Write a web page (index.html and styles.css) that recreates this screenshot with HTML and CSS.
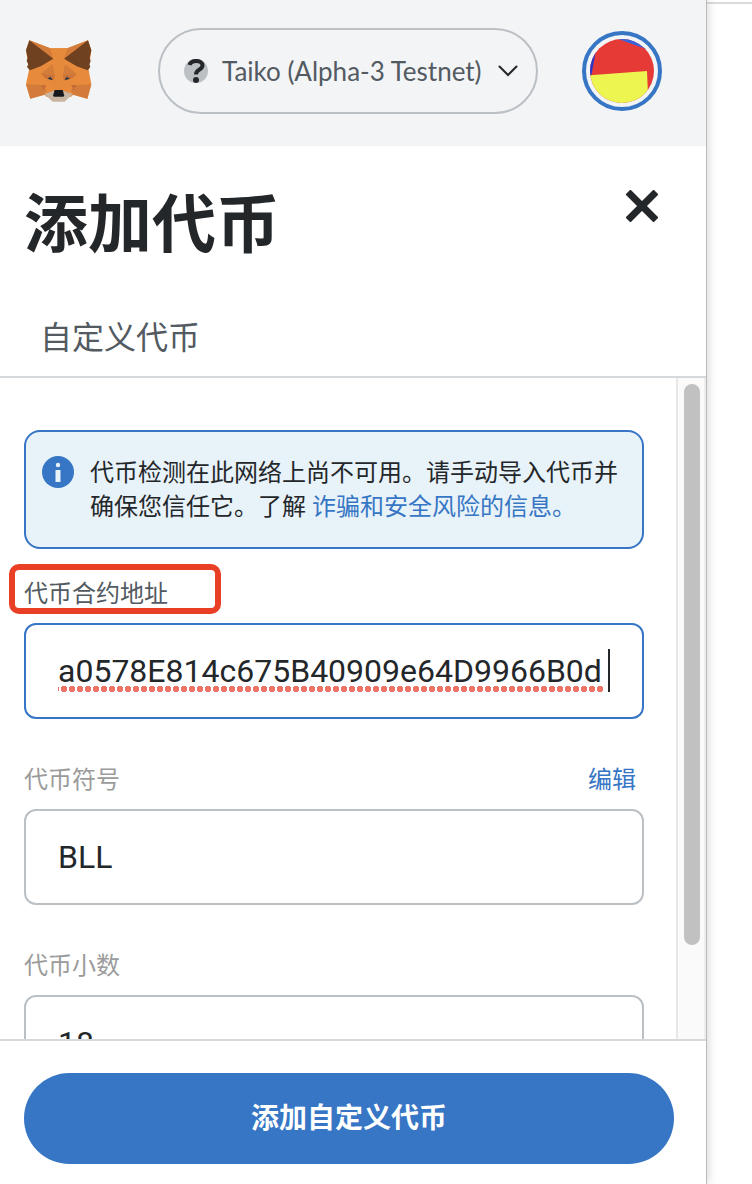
FILE: index.html
```html
<!DOCTYPE html>
<html lang="zh-CN">

<head>
    <meta charset="UTF-8">
    <meta name="viewport" content="width=device-width, initial-scale=1.0">
    <title>添加代币</title>
    <link rel="stylesheet" href="styles.css">
</head>

<body>
    <div class="popup">
        <header class="app-header">
            <svg class="logo" viewBox="45 45 201 186" aria-hidden="true">
                <polygon fill="#e78a3b" points="58,46 121,70 172,70 234,46 244,76 236,135 244,178 232,221 190,209 182,216 110,216 103,209 61,221 48,178 57,135 48,76" />
                <polygon fill="#d47c3a" points="58,46 121,70 130,101" />
                <polygon fill="#d47c3a" points="234,46 172,70 162,101" />
                <polygon fill="#6f4120" points="58,46 130,101 92,124 60,136 51,126 55,118 50,108 53,98 48,76" />
                <polygon fill="#6f4120" points="234,46 162,101 200,124 233,136 241,126 238,118 242,108 239,98 244,76" />
                <polygon fill="#e5893a" points="121,70 172,70 162,101 158,196 134,196 130,101" />
                <polygon fill="#d47c3a" points="128,118 134,150 93,146" />
                <polygon fill="#d47c3a" points="165,118 159,150 200,146" />
                <polygon fill="#cb7338" points="93,146 134,150 132,166 106,160" />
                <polygon fill="#cb7338" points="200,146 159,150 161,166 187,160" />
                <polygon fill="#d27b3b" points="48,178 92,180 110,196 103,209 61,221" />
                <polygon fill="#d27b3b" points="244,178 200,180 182,196 190,209 232,221" />
                <polygon fill="#c26c36" points="92,180 108,180 103,196" />
                <polygon fill="#c26c36" points="200,180 184,180 190,196" />
                <polygon fill="#c8b5a2" points="103,207 130,198 162,198 188,207 164,230 128,230" />
                <polygon fill="#16181b" points="134,195 158,195 163,212 160,215 132,215 129,212" />
                <polygon fill="#24384a" points="112,161 122,155 128,166" />
                <polygon fill="#24384a" points="180,161 170,155 164,166" />
            </svg>

            <button type="button" class="network">
                <svg class="network-icon" viewBox="0 0 24 24" aria-hidden="true">
                    <circle cx="12" cy="12" r="12" fill="#bbc0c5" />
                    <path d="M5.500 6C7 .5 18.500 .5 18.500 6.500C18.500 11 12 10 12 15.500" fill="none" stroke="#24272a" stroke-width="4" />
                    <circle cx="12" cy="21" r="3" fill="#24272a" />
                </svg>
                <span class="network-name">Taiko (Alpha-3 Testnet)</span>
                <svg class="chevron" viewBox="0 0 20 12" aria-hidden="true">
                    <path d="M1.500 1.500L10 10L18.500 1.500" fill="none" stroke="#24272a" stroke-width="2" stroke-linecap="round" />
                </svg>
            </button>

            <button type="button" class="account" aria-label="账户">
                <svg class="identicon" viewBox="0 0 192 192" aria-hidden="true">
                    <rect width="192" height="192" fill="#e53a36" />
                    <polygon fill="#2b36c8" points="0,0 24,0 4,110 0,110" />
                    <polygon fill="#3464e2" points="85,0 192,0 192,40 158,26" />
                    <polygon fill="#edf550" points="0,109 171,96 175,192 0,192" />
                </svg>
            </button>
        </header>

        <div class="page-header">
            <div class="title-row">
                <h1>添加代币</h1>
                <button type="button" class="close" aria-label="关闭">
                    <svg viewBox="0 0 32 32" aria-hidden="true">
                        <path d="M2 2L30 30M30 2L2 30" stroke="#24272a" stroke-width="7" />
                    </svg>
                </button>
            </div>
            <div class="tab">自定义代币</div>
        </div>

        <div class="page-body">
            <form class="token-form" id="tokenForm">
                <div class="notice">
                    <svg class="notice-icon" viewBox="0 0 32 32" aria-hidden="true">
                        <circle cx="16" cy="16" r="16" fill="#3676c4" />
                        <circle cx="16" cy="9" r="2.200" fill="#e8f2f9" />
                        <rect x="13.500" y="14" width="5" height="12" fill="#e8f2f9" />
                    </svg>
                    <p>代币检测在此网络上尚不可用。请手动导入代币并确保您信任它。了解 <a href="#">诈骗和安全风险的信息。</a></p>
                </div>

                <div class="field active">
                    <div class="label-row">
                        <label for="address">代币合约地址</label>
                    </div>
                    <div class="input-box">
                        <input type="text" id="address" value="a0578E814c675B40909e64D9966B0d" spellcheck="false">
                        <span class="spelling"></span>
                        <span class="caret"></span>
                    </div>
                </div>

                <div class="field">
                    <div class="label-row">
                        <label for="symbol">代币符号</label>
                        <button type="button" class="edit">编辑</button>
                    </div>
                    <div class="input-box">
                        <input type="text" id="symbol" value="BLL">
                    </div>
                </div>

                <div class="field">
                    <div class="label-row">
                        <label for="decimals">代币小数</label>
                    </div>
                    <div class="input-box">
                        <input type="text" id="decimals" value="18">
                    </div>
                </div>
            </form>
            <div class="scrollbar" aria-hidden="true">
                <div class="thumb"></div>
            </div>
        </div>

        <footer>
            <button type="submit" form="tokenForm" class="submit">添加自定义代币</button>
        </footer>
    </div>
</body>

</html>
```
FILE: styles.css
```css
*,
*::before {
    box-sizing: border-box;
    margin: 0;
    padding: 0;
}

body {
    background: linear-gradient(white 2px, #dadada 2px, #dadada 4px, white 4px);
    color: #24272a;
    font-family: Roboto, "Noto Sans CJK SC", sans-serif;
    font-size: 24px;
    line-height: 34px;
}

button,
input {
    font: inherit;
    color: inherit;
    background: none;
    border: none;
    outline: none;
}

button {
    cursor: pointer;
}

svg {
    display: block;
}

.popup {
    display: flex;
    flex-direction: column;
    height: 100vh;
    margin-right: 45px;
    border-right: 1px solid #b8bcbc;
    box-shadow: 0 0 10px rgba(0, 0, 0, 0.2);
    background: white;
}

/* top bar */
.app-header {
    display: flex;
    align-items: center;
    flex-shrink: 0;
    padding: 28px 44px 32px 25px;
    background: #f2f4f6;
}

.logo {
    width: 67px;
    height: 62px;
}

.network {
    flex: 1;
    display: flex;
    align-items: center;
    min-width: 0;
    height: 86px;
    margin: 0 44px 0 66px;
    padding: 0 18px 0 24px;
    border: 2px solid #bbc0c5;
    border-radius: 43px;
    color: #535a61;
    font-family: Lato, sans-serif;
    font-size: 26px;
}

.network-icon {
    width: 24px;
    height: 24px;
}

.network-name {
    flex: 1;
    padding-left: 14px;
    text-align: left;
    white-space: nowrap;
}

.chevron {
    width: 20px;
    height: 12px;
}

.account {
    width: 80px;
    height: 80px;
    padding: 4px;
    border: 4px solid #3676c4;
    border-radius: 50%;
}

.identicon {
    width: 64px;
    height: 64px;
    border-radius: 50%;
}

/* page title */
.page-header {
    flex-shrink: 0;
    padding: 40px 48px 14px 24px;
    border-bottom: 2px solid #d6d9dc;
}

.title-row {
    display: flex;
    justify-content: space-between;
    align-items: flex-start;
    margin-bottom: 48px;
}

h1 {
    font-size: 64px;
    line-height: 80px;
    font-weight: 700;
}

.close {
    width: 32px;
    height: 32px;
    margin-top: 4px;
}

.tab {
    padding-left: 16px;
    font-size: 32px;
    line-height: 48px;
    color: #535a61;
}

/* form */
.page-body {
    flex: 1;
    display: flex;
    min-height: 0;
    overflow: hidden;
}

.token-form {
    flex: 1;
    min-width: 0;
    padding: 52px 32px 0 24px;
}

.notice {
    display: flex;
    align-items: flex-start;
    gap: 16px;
    margin-bottom: 28px;
    padding: 24px 20px 23px 16px;
    border: 2px solid #3676c4;
    border-radius: 16px;
    background: #e8f2f9;
}

.notice-icon {
    flex-shrink: 0;
    width: 32px;
    height: 32px;
}

a,
.edit {
    color: #3676c4;
    text-decoration: none;
}

.field {
    margin-bottom: 44px;
}

.label-row {
    display: flex;
    justify-content: space-between;
    margin-bottom: 12px;
    padding-right: 8px;
    color: #9b9b9b;
}

.active .label-row {
    position: relative;
    color: #535a61;
}

/* red marker round the address label */
.active .label-row::before {
    content: "";
    position: absolute;
    top: -13px;
    left: -15px;
    width: 212px;
    height: 50px;
    border: 6px solid #e93f24;
    border-radius: 10px;
}

.input-box {
    position: relative;
    height: 96px;
    padding: 0 32px;
    border: 2px solid #bbc0c5;
    border-radius: 12px;
}

.active .input-box {
    border-color: #3676c4;
}

.input-box input {
    width: 100%;
    height: 100%;
    font-size: 32px;
}

.spelling {
    position: absolute;
    left: 32px;
    right: 38px;
    bottom: 25px;
    height: 6px;
    background: radial-gradient(circle, #ec7467 3px, transparent 3px) 2px 0 / 8px 6px;
}

.caret {
    position: absolute;
    right: 32px;
    bottom: 25px;
    width: 2px;
    height: 43px;
    background: #24272a;
}

.scrollbar {
    width: 30px;
    padding: 6px;
    border-left: 2px solid #e8e8e8;
    border-right: 2px solid #ededed;
    background: #fafafa;
}

.thumb {
    width: 16px;
    height: calc(100% - 88px);
    border-radius: 8px;
    background: #c1c1c1;
}

/* bottom button */
footer {
    flex-shrink: 0;
    padding: 32px 32px 20px 24px;
    border-top: 2px solid #d6d9dc;
}

.submit {
    display: block;
    width: 100%;
    height: 91px;
    border-radius: 46px;
    background: #3676c4;
    color: white;
    font-size: 28px;
    font-weight: 700;
}
```
